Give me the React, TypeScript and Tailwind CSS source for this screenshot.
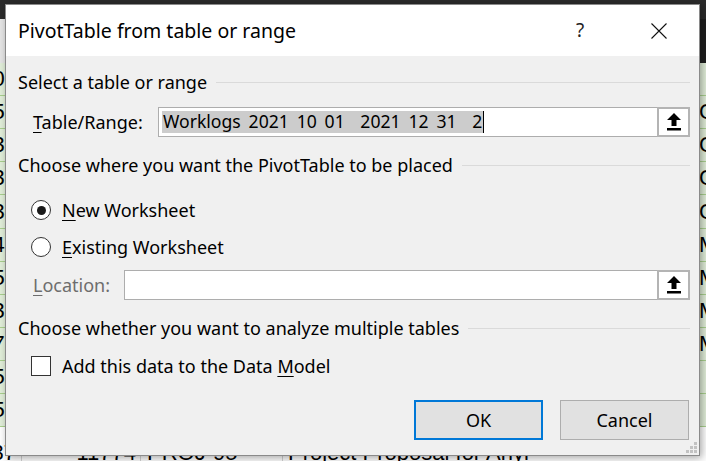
import React from "react";

const sheetRows = [
  { a: "06", right: "" },
  { a: "56", right: "Closed" },
  { a: "33", right: "Closed" },
  { a: "38", right: "Closed" },
  { a: "34", right: "Closed" },
  { a: "43", right: "Medium" },
  { a: "56", right: "Medium" },
  { a: "38", right: "Medium" },
  { a: "75", right: "Medium" },
  { a: "56", right: "" },
  { a: "53", right: "" },
];

function UpArrow() {
  return (
    <svg width="14" height="18" viewBox="0 0 14 18">
      <polygon points="7,0 14,7 9.5,7 9.5,13 4.5,13 4.5,7 0,7" fill="#000" />
      <rect x="0" y="15" width="14" height="2.5" fill="#000" />
    </svg>
  );
}

function RangeBox({ children, className }: { children?: React.ReactNode; className?: string }) {
  return (
    <div className={`flex h-[30px] border border-[#adadad] bg-white ${className ?? ""}`}>
      <div className="flex flex-1 items-center overflow-hidden pl-[3px]">{children}</div>
      <div className="-my-px -mr-px flex w-[33px] items-center justify-center border-2 border-[#b4b4b4] bg-white">
        <UpArrow />
      </div>
    </div>
  );
}

function Section({ title }: { title: string }) {
  return (
    <div className="flex h-[24px] items-center">
      <span className="whitespace-nowrap">{title}</span>
      <div className="ml-[9px] h-px flex-1 bg-[#dadada]" />
    </div>
  );
}

function Radio({ checked, children }: { checked?: boolean; children: React.ReactNode }) {
  return (
    <div className="ml-[13px] flex h-[24px] items-center">
      <div className="flex h-[20px] w-[20px] items-center justify-center rounded-full border border-[#333] bg-white">
        {checked && <div className="h-[9px] w-[9px] rounded-full bg-[#1a1a1a]" />}
      </div>
      <span className="ml-[11px]">{children}</span>
    </div>
  );
}

function Dialog() {
  const u = (c: string) => <span className="underline decoration-1 underline-offset-[3px]">{c}</span>;
  const hid = <span className="text-transparent">_</span>;
  const hid2 = <span className="text-transparent">__</span>;
  return (
    <div className="absolute left-[5px] top-[4px] flex h-[452px] w-[695px] flex-col border border-[#8a8a8a] bg-[#f0f0f0] text-[18px] leading-none text-black shadow-[2px_2px_8px_rgba(0,0,0,0.35)]">
      {/* title bar */}
      <div className="flex h-[51px] items-center bg-white">
        <div className="flex-1 pl-[12px] text-[19.5px]">PivotTable from table or range</div>
        <div className="flex w-[46px] justify-center text-[19px] text-[#222]">?</div>
        <div className="ml-[33px] mr-[17px] flex w-[46px] justify-center">
          <svg width="16" height="16" viewBox="0 0 16 16">
            <path d="M0.5 0.5 L15.5 15.5 M15.5 0.5 L0.5 15.5" stroke="#111" strokeWidth="1.1" />
          </svg>
        </div>
      </div>

      {/* body */}
      <div className="relative flex flex-1 flex-col pl-[12px] pr-[9px]">
        <div className="mt-[14px]">
          <Section title="Select a table or range" />
        </div>
        <div className="mt-[13px] flex items-center">
          <div className="ml-[15px] w-[125px]">{u("T")}able/Range:</div>
          <RangeBox className="flex-1">
            <span className="flex h-[22px] items-center whitespace-pre bg-[#cccccc] pl-[1px] pr-px text-[17.6px]">
              Worklogs{hid}2021{hid}10{hid}01{hid2}2021{hid}12{hid}31{hid2}2
            </span>
            <span className="h-[22px] w-px bg-black" />
          </RangeBox>
        </div>

        <div className="mt-[16px]">
          <Section title="Choose where you want the PivotTable to be placed" />
        </div>
        <div className="mt-[21px]">
          <Radio checked>{u("N")}ew Worksheet</Radio>
        </div>
        <div className="mt-[13px]">
          <Radio>{u("E")}xisting Worksheet</Radio>
        </div>
        <div className="mt-[11px] flex items-center">
          <div className="ml-[15px] w-[91px] text-[#6d6d6d]">{u("L")}ocation:</div>
          <RangeBox className="flex-1" />
        </div>

        <div className="mt-[16px]">
          <Section title="Choose whether you want to analyze multiple tables" />
        </div>
        <div className="ml-[13px] mt-[14px] flex h-[24px] items-center">
          <div className="h-[20px] w-[20px] border border-[#333] bg-white" />
          <span className="ml-[11px]">Add this data to the Data {u("M")}odel</span>
        </div>

        <div className="mt-[22px] flex justify-end gap-[17px] pr-px">
          <button className="flex h-[40px] w-[129px] items-center justify-center border-2 border-[#0078d7] bg-[#e1e1e1]">
            OK
          </button>
          <button className="flex h-[40px] w-[129px] items-center justify-center border border-[#adadad] bg-[#e1e1e1]">
            Cancel
          </button>
        </div>

        {/* resize grip */}
        <svg className="absolute bottom-[1px] right-[1px]" width="12" height="12" viewBox="0 0 12 12">
          <rect x="8" y="0" width="3" height="3" fill="#c2c2c2" />
          <rect x="4" y="4" width="3" height="3" fill="#c2c2c2" />
          <rect x="8" y="4" width="3" height="3" fill="#c2c2c2" />
          <rect x="0" y="8" width="3" height="3" fill="#c2c2c2" />
          <rect x="4" y="8" width="3" height="3" fill="#c2c2c2" />
          <rect x="8" y="8" width="3" height="3" fill="#c2c2c2" />
        </svg>
      </div>
    </div>
  );
}

export default function App() {
  return (
    <div className="relative h-[461px] w-[706px] overflow-hidden bg-[#1f1f1f] font-['Noto_Sans',sans-serif]">
      {/* spreadsheet behind the dialog */}
      <div className="flex h-full flex-col font-['Liberation_Sans',sans-serif] text-[22px] leading-none text-black">
        <div className="h-[20px] bg-[#2b2b2b]" />
        <div className="flex h-[45px]">
          <div className="flex-1 bg-[#e6e6e6]" />
          <div className="w-[8px] bg-[#1f1f1f]" />
        </div>
        {sheetRows.map((r, i) => (
          <div key={i} className="flex h-[34px] border-b border-[#a9d08e] bg-[#e2efda]">
            <div className="flex w-[22px] items-center justify-end overflow-hidden whitespace-nowrap pr-[5px]">
              {r.a}
            </div>
            <div className="flex-1" />
            <div className="flex w-[7px] items-center overflow-hidden whitespace-nowrap">{r.right}</div>
          </div>
        ))}
        <div className="flex h-[34px] bg-white">
          <div className="flex w-[22px] justify-end overflow-hidden whitespace-nowrap border-r border-[#d4d4d4] pr-[5px] pt-[15px]">
            37
          </div>
          <div className="flex w-[119px] justify-end border-r border-[#d4d4d4] pr-[4px] pt-[15px]">11774</div>
          <div className="w-[142px] border-r border-[#d4d4d4] pl-[6px] pt-[15px]">PROJ-95</div>
          <div className="flex-1 whitespace-nowrap pl-[5px] pt-[15px]">Project Proposal for Anyl</div>
        </div>
      </div>

      <Dialog />
    </div>
  );
}
